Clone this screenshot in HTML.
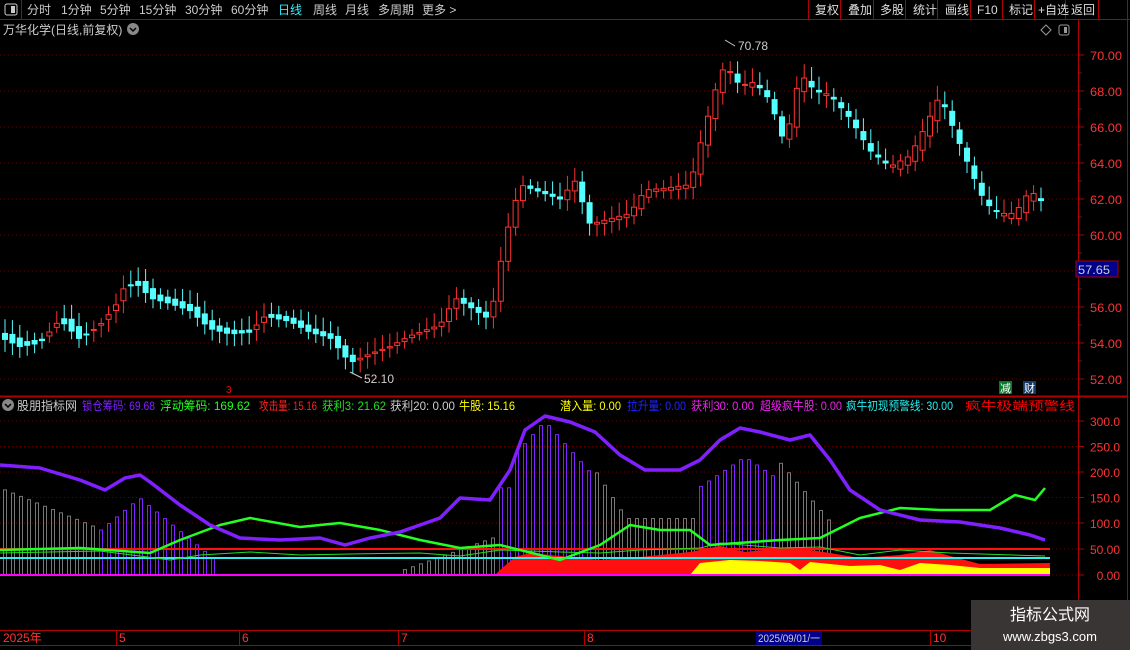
<!DOCTYPE html>
<html><head><meta charset="utf-8"><style>
*{margin:0;padding:0;box-sizing:border-box}
body{width:1130px;height:650px;background:#000;overflow:hidden;font-family:"Liberation Sans","Noto Sans CJK SC",sans-serif;position:relative;color:#ccc}
</style></head><body>
<svg id="s" width="1130" height="650" style="position:absolute;left:0;top:0" font-family="Liberation Sans, Noto Sans CJK SC, sans-serif"></svg>
<script>
var s=document.getElementById('s'),h='';
function L(x1,y1,x2,y2,c,w,d){h+='<line x1="'+x1+'" y1="'+y1+'" x2="'+x2+'" y2="'+y2+'" stroke="'+c+'" stroke-width="'+(w||1)+'"'+(d?' stroke-dasharray="'+d+'"':'')+'/>';}
function T(x,y,t,c,sz,a,tl){h+='<text x="'+x+'" y="'+y+'" fill="'+c+'" font-size="'+(sz||12)+'"'+(a?' text-anchor="'+a+'"':'')+(tl?' textLength="'+tl+'" lengthAdjust="spacingAndGlyphs"':'')+'>'+t+'</text>';}
L(0,19.5,1130,19.5,'#b00000');L(21.5,0,21.5,19,'#b00000');
[808,840,873,905,937,970,1002,1034,1065,1098,1127].forEach(function(x){L(x+.5,0,x+.5,19,'#b00000')});
L(1078.5,20,1078.5,630,'#b00000');L(1127.5,20,1127.5,630,'#b00000');
L(0,396.5,1128,396.5,'#b00000',2);
L(0,630.5,1130,630.5,'#b00000');L(0,645.5,1130,645.5,'#b00000');
var m=[['分时',27],['1分钟',61],['5分钟',100],['15分钟',139],['30分钟',185],['60分钟',231],['日线',278],['周线',313],['月线',345],['多周期',378],['更多 >',422]];
m.forEach(function(a){T(a[1],14,a[0],a[0]=='日线'?'#3ef':'#ccc',12)});
h+='<rect x="5" y="4" width="12" height="11" rx="2" fill="none" stroke="#ccc"/><rect x="11" y="6" width="4" height="7" fill="#ccc"/>';
var r=[['复权',813],['叠加',846],['多股',878],['统计',911],['画线',943],['F10',975],['标记',1007],['+自选',1036],['返回',1069]];
r.forEach(function(a){T(a[1]+2,14,a[0],'#ddd',12)});
T(3,34,'万华化学(日线,前复权)','#ccc',12);h+='<circle cx="133" cy="29" r="6" fill="#888"/><path d="M130 28l3 3 3-3" stroke="#000" fill="none" stroke-width="1.5"/>';
h+='<path d="M1046 25l5 5-5 5-5-5z" fill="none" stroke="#999"/><rect x="1059" y="25" width="10" height="10" rx="2" fill="none" stroke="#999"/><rect x="1064" y="27" width="3" height="6" fill="#999"/>';
for(var p=52;p<=70;p+=2){var y=55+(70-p)*18;L(0,y,1078,y,'#6a0000',1,'1 3');if(p!=58)T(1122,y+5,p.toFixed(2),'#f33',12,'end',32);L(1078,y,1084,y,'#b00000');}
for(var p=53;p<=69;p+=2){var y=55+(70-p)*18;L(1078,y,1082,y,'#b00000');}
h+='<rect x="1076" y="261" width="42" height="16" fill="#00008a" stroke="#b00000"/>';T(1078,274,'57.65','#ccc',12,null,32);
var K=[[5,54.2],[20,53.8],[40,54],[60,55.3],[80,54.2],[100,55],[115,56],[125,57.2],[140,57.2],[150,56.5],[170,56.2],[190,55.8],[210,54.8],[230,54.5],[250,54.6],[265,55.5],[290,55.2],[310,54.6],[330,54.3],[350,52.9],[370,53.4],[390,53.8],[410,54.4],[440,55],[455,56.5],[470,56],[490,55.3],[505,59.8],[520,62.8],[540,62.4],[560,62],[575,63],[590,60.6],[610,60.9],[630,61.2],[645,62.5],[665,62.6],[690,62.8],[700,65],[715,68],[725,69.5],[740,68.3],[755,68.5],[770,67.5],[785,65],[800,69],[815,68],[830,67.8],[850,66.5],[870,64.7],[890,63.8],[910,64.4],[925,66],[940,67.8],[955,65.7],[970,63.7],[985,61.8],[1000,61.2],[1015,61.2],[1030,62.5],[1045,61.7]];
function P(x){for(var i=0;i<K.length-1;i++){if(x<=K[i+1][0]){var a=K[i],b=K[i+1];return a[1]+(b[1]-a[1])*(x-a[0])/(b[0]-a[0]);}}return K[K.length-1][1];}
function Y(p){return 55+(70-p)*18;}
var prev=P(3);
for(var x=5;x<=1045;x+=7.4){var c=P(x),o=prev+Math.sin(x*1.7)*0.35,up=c>=o;var hi=Math.max(o,c)+0.3+Math.abs(Math.sin(x*.9))*0.5,lo=Math.min(o,c)-0.3-Math.abs(Math.cos(x*1.3))*0.4;
var col=up?'#ff3232':'#54ffff';L(x,Y(hi),x,Y(lo),col);var y1=Y(Math.max(o,c)),y2=Y(Math.min(o,c));if(y2-y1<1)y2=y1+1;
h+='<rect x="'+(x-2.5)+'" y="'+y1+'" width="5" height="'+(y2-y1)+'" fill="'+(up?'#000':col)+'" stroke="'+col+'"/>';prev=c;}
T(738,50,'70.78','#ccc',12);L(725,40,735,46,'#ccc');T(364,383,'52.10','#ccc',12);L(350,372,362,378,'#ccc');
T(226,393,'3','#f00',10);
h+='<rect x="999" y="381" width="13" height="13" fill="#0a7a2a"/><rect x="1023" y="381" width="13" height="13" fill="#153a6a"/>';T(1000,392,'减','#fff',11);T(1024,392,'财','#fff',11);
h+='<circle cx="8" cy="405" r="6" fill="#888"/><path d="M5 404l3 3 3-3" stroke="#000" fill="none" stroke-width="1.5"/>';
var lg=[['股朋指标网','#ccc',17,60],['锁仓筹码: 69.68','#8020ff',82,73],['浮动筹码: 169.62','#2f2',160,90],['攻击量: 15.16','#f22',259,58],['获利3: 21.62','#2d2',322,64],['获利20: 0.00','#ccc',390,65],['牛股: 15.16','#ff0',459,56],['潜入量: 0.00','#ff0',560,61],['拉升量: 0.00','#22f',627,59],['获利30: 0.00','#e2e',691,63],['超级疯牛股: 0.00','#e2e',760,82],['疯牛初现预警线: 30.00','#2ee',846,107],['疯牛极端预警线','#f00',965,110]];
lg.forEach(function(a){T(a[2],410,a[0],a[1],12,null,a[3])});
h+='<rect x="1076" y="398" width="50" height="14" fill="#000"/>';L(1078.5,397,1078.5,630,'#b00000');
[[300,421,'300.0'],[250,446.5,'250.0'],[200,472,'200.0'],[150,497.5,'150.0'],[100,523,'100.0'],[50,549,'50.00'],[0,575,'0.00']].forEach(function(a){L(0,a[1],1078,a[1],'#6a0000',1,'1 3');T(1120,a[1]+5,a[2],'#f33',12,'end');L(1078,a[1],1084,a[1],'#b00000');});
function V(v){return 575-v*0.513;}
for(var x=5;x<=1045;x+=8){var v=0,c='#777';
if(x<100){v=170-(x*0.8);}else if(x<215){v=Math.max(5,150-Math.abs(x-140)*1.6);c='#8020ff';}
else if(x<400){v=0;}else if(x<500){v=(x-390)*0.7;}else if(x<590){v=300-Math.abs(x-545)*2.2;c='#8020ff';if(x<510)v=170;}
else if(x<700){v=x<625?220-(x-590)*3:110;}else if(x<835){v=230-Math.abs(x-745)*1.3;c=x>780?'#777':'#8020ff';if(x>780)v=220-(x-780)*2.3;}else if(x<870){v=30;}
if(v>4)h+='<rect x="'+(x-1.5)+'" y="'+V(v)+'" width="3" height="'+(575-V(v))+'" fill="none" stroke="'+c+'"/>';}
function poly(pts,c,w,d){h+='<polyline points="'+pts.map(function(a){return a.join(',')}).join(' ')+'" fill="none" stroke="'+c+'" stroke-width="'+w+'"'+(d?' stroke-dasharray="'+d+'"':'')+' stroke-linejoin="round"/>';}
h+='<path d="M495 575 L500 570 L515 557 L530 553 L560 556 L600 560 L640 557 L690 552 L720 546 L745 552 L790 547 L830 553 L860 558 L900 555 L930 550 L950 556 L980 564 L1050 563 L1050 575 Z" fill="#ff1010"/>';
h+='<path d="M690 575 L700 563 L730 560 L760 561 L790 563 L800 570 L810 562 L850 566 L880 565 L900 570 L920 563 L950 565 L980 568 L1050 568 L1050 575 Z" fill="#ff0"/>';
L(0,549,1050,549,'#ff1010',2);L(0,558,1050,558,'#3ee',2);L(0,575,1050,575,'#f0f',2);
poly([[0,553],[100,551],[140,556],[170,560],[200,555],[250,552],[300,555],[350,554],[420,553],[460,556],[500,550],[560,552],[600,553],[640,550],[700,548],[720,543],[780,548],[820,547],[860,555],[900,550],[950,553],[1045,556]],'#2d2',1);
poly([[0,550],[80,548],[150,553],[180,540],[220,525],[250,518],[300,527],[340,523],[380,530],[420,540],[460,548],[500,545],[560,560],[600,545],[630,525],[660,530],[690,530],[710,545],[780,540],[820,538],[860,518],[900,508],[940,510],[990,510],[1015,495],[1035,500],[1045,488]],'#2f2',2.5,'');
poly([[0,465],[40,468],[80,480],[105,490],[125,478],[140,475],[150,482],[180,505],[210,525],[240,538],[280,540],[320,538],[345,545],[370,538],[400,532],[440,518],[460,498],[490,500],[510,470],[525,430],[545,416],[570,422],[595,432],[620,455],[645,470],[680,470],[700,460],[720,440],[740,428],[760,432],[790,440],[810,435],[830,460],[850,490],[880,510],[920,520],[960,522],[1000,528],[1030,535],[1045,540]],'#8020ff',3.5);
[[116,'5'],[239,'6'],[398,'7'],[584,'8'],[930,'10']].forEach(function(a){L(a[0]+.5,631,a[0]+.5,645,'#b00000');T(a[0]+3,642,a[1],'#f33',12);});
T(3,642,'2025年','#f33',12);
h+='<rect x="756" y="631" width="66" height="14" fill="#00008a"/>';T(758,642,'2025/09/01/一','#ccc',11,null,62);
h+='<rect x="971" y="600" width="159" height="50" fill="#3a3535"/>';T(1050,620,'指标公式网','#fff',16,'middle');T(1050,641,'www.zbgs3.com','#fff',13,'middle');
s.innerHTML=h;
</script>
</body></html>
